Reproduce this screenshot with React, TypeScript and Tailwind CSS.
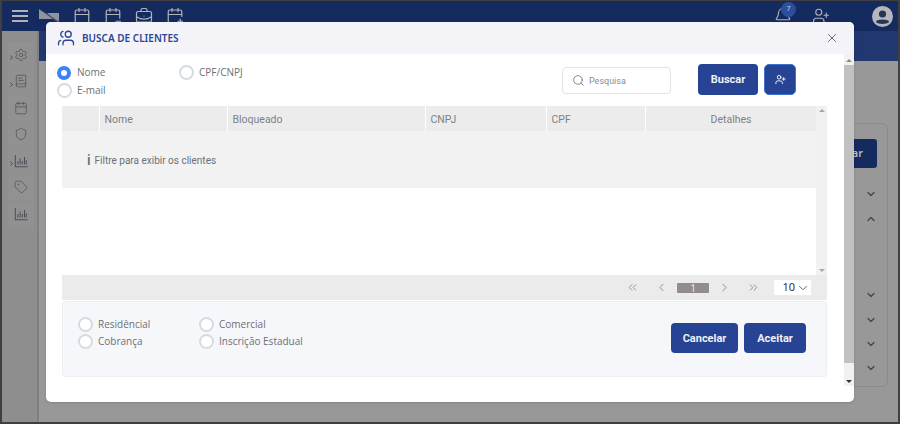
import { Bell, BookText, BriefcaseBusiness, Calendar, CalendarMinus, CalendarPlus, ChevronDown, ChevronLeft, ChevronRight, ChevronUp, ChevronsLeft, ChevronsRight, Search, Settings, Shield, Tag, UserPlus, Users, X } from 'lucide-react'

function BarsIcon({ size = 14 }: { size?: number }) {
  return (
    <svg width={size} height={size} viewBox="0 0 16 16" fill="none" stroke="currentColor" strokeWidth="1.2">
      <path d="M1.5 1 V14.5 H15.5" />
      <path d="M4.5 12 V8 M7 12 V5 M9.5 12 V8 M12 12 V3.5 M14 12 V7" />
    </svg>
  )
}

const SIDE = [
  { icon: Settings, arrow: true },
  { icon: BookText, arrow: true },
  { icon: Calendar },
  { icon: Shield },
  { icon: BarsIcon, arrow: true },
  { icon: Tag },
  { icon: BarsIcon },
]

const COLS = [
  { label: '', width: 'w-[37px]' },
  { label: 'Nome', width: 'w-[127px]' },
  { label: 'Bloqueado', width: 'w-[197px]' },
  { label: 'CNPJ', width: 'w-[120px]' },
  { label: 'CPF', width: 'w-[98px]' },
]

function Radio({ label, checked, className }: { label: string; checked?: boolean; className?: string }) {
  return (
    <label className={`flex items-center h-[17px] text-[10px] text-[#6b6f76] font-['Open_Sans',sans-serif] ${className ?? ''}`}>
      <span
        className={
          checked
            ? 'w-[14px] h-[14px] rounded-full border-[4px] border-[#3b82f6] bg-white mr-[6px] flex-shrink-0'
            : 'w-[15px] h-[15px] rounded-full border-2 border-[#d6dae2] bg-white mr-[5px] flex-shrink-0'
        }
      />
      {label}
    </label>
  )
}

export default function App() {
  return (
    <div className="relative w-[900px] h-[424px] overflow-hidden bg-[#989898] border-t border-x-2 border-b-2 border-[#3f3f3f] font-['Noto_Sans',sans-serif]">
      {/* Page behind the modal */}
      <header className="h-[30px] bg-[#152a5e] flex items-center pl-[10px] text-[#b0b3bb]">
        <div className="w-[16px] flex flex-col gap-[3px]">
          <span className="h-[2px] bg-[#aeb2bb]" />
          <span className="h-[2px] bg-[#aeb2bb]" />
          <span className="h-[2px] bg-[#aeb2bb]" />
        </div>
        <svg className="ml-[11px]" width="20" height="14" viewBox="0 0 20 14">
          <path d="M0 0 L0 10 L14 10 Z" fill="#8f949e" />
          <path d="M8 4 L20 4 L20 14 Z" fill="#8f949e" />
          <path d="M0 0 L20 14 L20 12 Z" fill="#5d6578" />
        </svg>
        <div className="ml-[14px] flex gap-[13px]">
          <Calendar size={18} strokeWidth={1.6} />
          <CalendarMinus size={18} strokeWidth={1.6} />
          <BriefcaseBusiness size={18} strokeWidth={1.6} />
          <CalendarPlus size={18} strokeWidth={1.6} />
        </div>
        <div className="ml-auto relative mr-[20px]">
          <Bell size={18} strokeWidth={1.5} />
          <span className="absolute -top-[5px] left-[7px] w-[15px] h-[15px] rounded-full bg-[#2b4f9c] text-[7px] text-[#cdd3e0] flex items-center justify-center">7</span>
        </div>
        <UserPlus size={18} strokeWidth={1.5} className="mr-[42px]" />
        <svg className="mr-[5px]" width="21" height="21" viewBox="0 0 21 21">
          <circle cx="10.5" cy="10.5" r="10.5" fill="#b4b7bd" />
          <circle cx="10.5" cy="8" r="3.6" fill="#283452" />
          <path d="M3.8 16 C5 12.8 16 12.8 17.2 16 C14.5 18.6 6.5 18.6 3.8 16 Z" fill="#283452" />
        </svg>
      </header>
      <div className="flex h-[391px]">
        <aside className="w-[37px] flex-shrink-0 bg-[#8e8e8e] border-r-2 border-[#808080] pt-[11px] pl-[6px] flex flex-col gap-[1px]">
          {SIDE.map(({ icon: Icon, arrow }, i) => (
            <div key={i} className="relative w-[26px] h-[25.5px] bg-[#919191] flex items-center justify-center text-[#4d5058]">
              {arrow && <ChevronRight size={7} strokeWidth={3} className="absolute left-0 top-[12px] text-[#36415f]" />}
              <Icon size={14} strokeWidth={1.25} />
            </div>
          ))}
        </aside>
        <div className="flex-1 flex flex-col">
          <div className="h-[30px] bg-[#20386f]" />
          <div className="flex-1 flex justify-end pt-[62px] pr-[10px]">
            <div className="w-[100px] h-[264px] border border-[#8a8a8a] rounded-[6px] flex flex-col items-end pr-[10px] pt-[15px] text-[#454545]">
              <div className="w-[60px] h-[29px] bg-[#152a5e] rounded-[3px] text-[11px] font-semibold text-[#b9bcc4] flex items-center justify-end pr-[14px] mb-[20px]">ar</div>
              <ChevronDown size={12} strokeWidth={2.5} className="mb-[13px]" />
              <ChevronUp size={12} strokeWidth={2.5} className="mb-[64px]" />
              <ChevronDown size={12} strokeWidth={2.5} className="mb-[13px]" />
              <ChevronDown size={12} strokeWidth={2.5} className="mb-[12px]" />
              <ChevronDown size={12} strokeWidth={2.5} className="mb-[12px]" />
              <ChevronDown size={12} strokeWidth={2.5} />
            </div>
          </div>
        </div>
      </div>

      {/* Modal */}
      <div className="absolute left-[44px] top-[21px] w-[808px] h-[380px] bg-white rounded-[5px] overflow-hidden flex flex-col shadow-sm">
        <div className="h-[32px] flex-shrink-0 bg-[#f4f4f8] flex items-center pl-[11px] pr-[15px]">
          <Users size={18} strokeWidth={1.75} className="text-[#2b4692] -scale-x-100" />
          <span className="ml-[7px] text-[10px] font-semibold text-[#2b4692]">BUSCA DE CLIENTES</span>
          <X size={14} strokeWidth={1.5} className="ml-auto text-[#555a63]" />
        </div>
        <div className="flex-1 flex min-h-0">
          <div className="flex-1 pl-[16px] pr-[17px] flex flex-col">
            {/* Filter row */}
            <div className="h-[52px] flex-shrink-0 flex items-start">
              <div className="w-[122px] -ml-[5px] pt-[10px] flex flex-col">
                <Radio label="Nome" checked />
                <Radio label="E-mail" className="mt-[1px]" />
              </div>
              <div className="pt-[10px]">
                <Radio label="CPF/CNPJ" />
              </div>
              <div className="ml-auto mr-[27px] mt-[13px] w-[109px] h-[27px] border border-[#e2e3e6] rounded-[4px] flex items-center pl-[9px] text-[#6b6f76] font-['Roboto',sans-serif]">
                <Search size={13} strokeWidth={1.5} />
                <span className="ml-[4px] mt-[3px] text-[9px] text-[#8a8d93]">Pesquisa</span>
              </div>
              <button className="mt-[10px] w-[60px] h-[31px] pt-[2px] bg-[#264493] rounded-[4px] text-[11px] font-bold text-[#eef0f6] font-['Roboto',sans-serif]">Buscar</button>
              <button className="mt-[10px] ml-[6px] mr-[31px] w-[32px] h-[31px] bg-[#264493] border border-[#3d6fd0] rounded-[5px] flex items-center justify-center text-white">
                <UserPlus size={11} strokeWidth={2} />
              </button>
            </div>

            {/* Table */}
            <div className="h-[169px] flex-shrink-0 flex font-['Roboto',sans-serif]">
              <div className="flex-1">
                <div className="h-[25px] flex gap-[1px] bg-white text-[10.5px] text-[#7e8187]">
                  {COLS.map(({ label, width }) => (
                    <div key={label} className={`${width} bg-[#ececec] flex items-center pl-[4.5px] pt-[2px]`}>{label}</div>
                  ))}
                  <div className="flex-1 bg-[#ececec] flex items-center justify-center pt-[2px]">Detalhes</div>
                </div>
                <div className="h-[57px] bg-[#f2f2f2] flex items-center pl-[25px] pt-[1px] text-[10px] text-[#6b6f76]">
                  <span className="mr-[4px] text-[14px] font-medium text-[#5b6a85]">i</span>
                  Filtre para exibir os clientes
                </div>
              </div>
              <div className="w-[11px] bg-[#f1f1f1] flex flex-col items-center justify-between py-[3px] text-[#9a9a9a]">
                <span className="w-0 h-0 border-x-[3px] border-x-transparent border-b-[3px] border-b-[#a8a8a8]" />
                <span className="w-0 h-0 border-x-[3px] border-x-transparent border-t-[3px] border-t-[#a8a8a8]" />
              </div>
            </div>

            {/* Pager */}
            <div className="h-[25px] flex-shrink-0 bg-[#ebebeb] flex items-center justify-end pr-[16px] text-[#8e8e8e]">
              <ChevronsLeft size={13} strokeWidth={1.75} />
              <ChevronLeft size={13} strokeWidth={1.75} className="ml-[16px]" />
              <span className="ml-[9px] w-[32px] h-[10px] bg-[#928c8c] rounded-[1px] text-[10px] leading-[10px] text-[#e6e6e6] text-center">1</span>
              <ChevronRight size={13} strokeWidth={1.75} className="ml-[9px]" />
              <ChevronsRight size={13} strokeWidth={1.75} className="ml-[16px]" />
              <div className="ml-[14px] w-[37px] h-[15px] bg-white flex items-center justify-end pr-[1px] text-[11px] text-[#333] gap-[1px]">
                10
                <ChevronDown size={14} strokeWidth={1.5} className="text-[#555]" />
              </div>
            </div>

            {/* Address type panel */}
            <div className="mt-[1px] h-[76px] flex-shrink-0 bg-[#f6f7fa] border border-[#eceef2] rounded-[3px] flex pl-[15px] pr-[20px]">
              <div className="w-[121px] pt-[14px] flex flex-col">
                <Radio label="Residêncial" />
                <Radio label="Cobrança" />
              </div>
              <div className="pt-[14px] flex flex-col">
                <Radio label="Comercial" />
                <Radio label="Inscrição Estadual" />
              </div>
              <button className="ml-auto mt-[21px] w-[67px] h-[30px] pt-[2px] bg-[#264493] rounded-[4px] text-[11px] font-bold text-[#eef0f6] font-['Roboto',sans-serif]">Cancelar</button>
              <button className="ml-[6px] mt-[21px] w-[62px] h-[30px] pt-[2px] bg-[#264493] rounded-[4px] text-[11px] font-bold text-[#eef0f6] font-['Roboto',sans-serif]">Aceitar</button>
            </div>
          </div>

          {/* Modal scrollbar */}
          <div className="w-[10px] flex-shrink-0 bg-[#f1f1f1] flex flex-col items-center pt-[5px] pb-[3px] mb-[16px]">
            <span className="w-0 h-0 border-x-[3px] border-x-transparent border-b-[3px] border-b-[#8a8a8a]" />
            <div className="w-full h-[298px] mt-[3px] bg-[#c1c1c1]" />
            <span className="mt-auto w-0 h-0 border-x-[3px] border-x-transparent border-t-[3px] border-t-[#333]" />
          </div>
        </div>
      </div>
    </div>
  )
}
